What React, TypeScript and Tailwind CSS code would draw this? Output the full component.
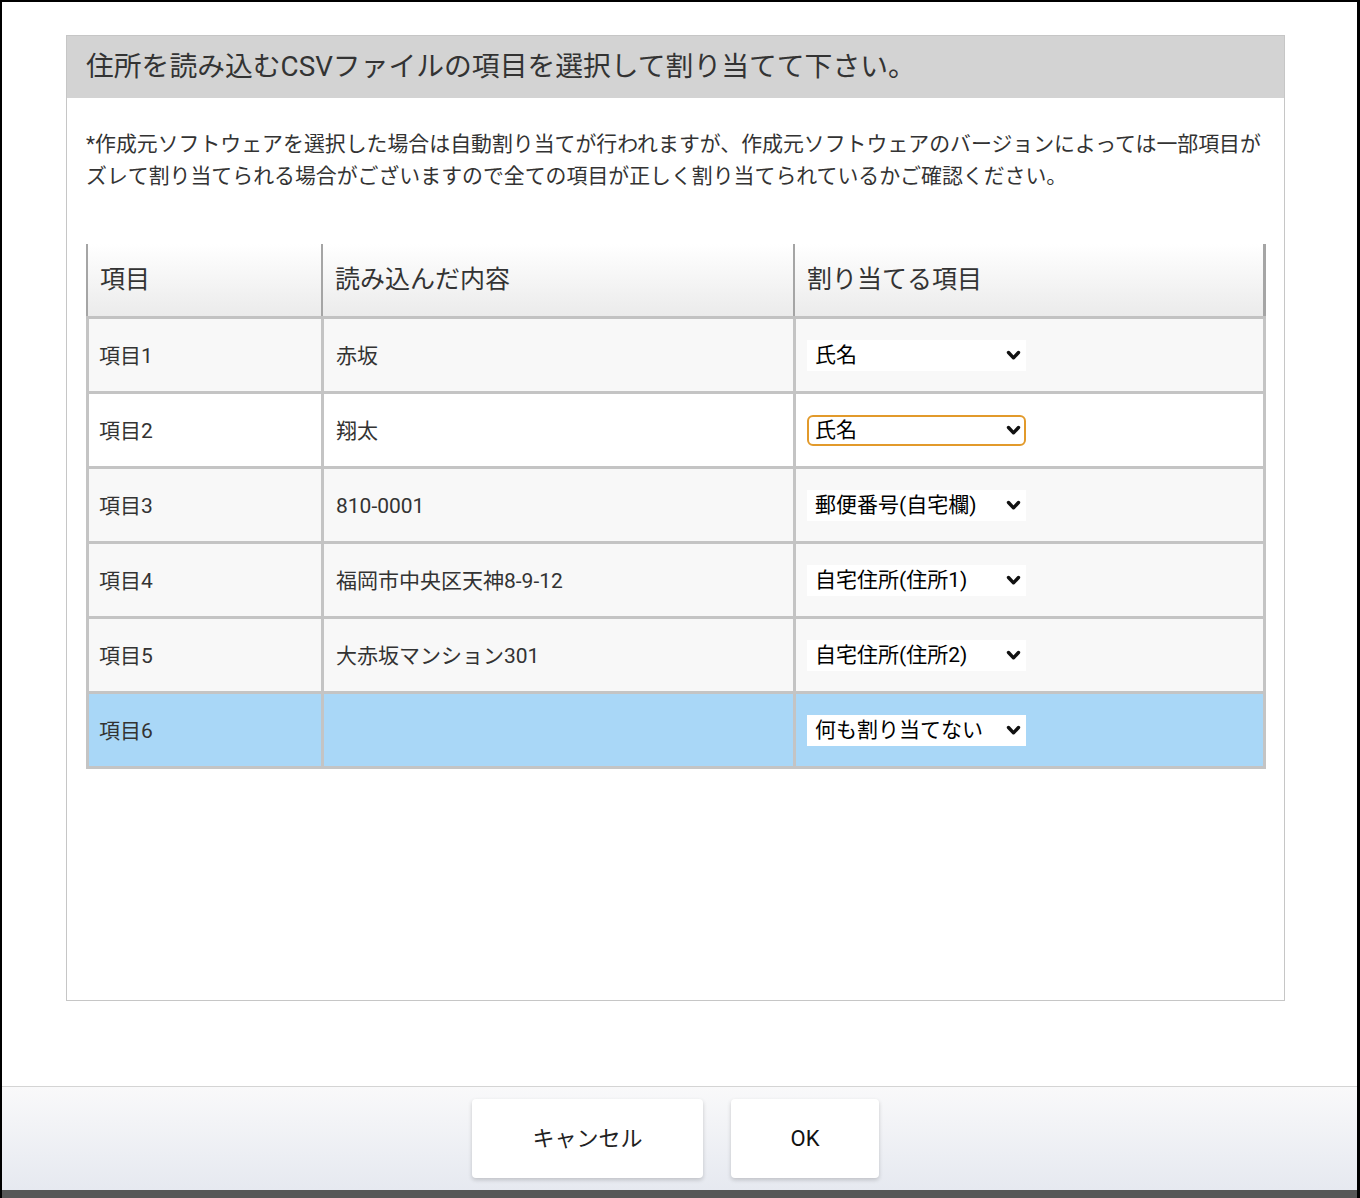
import React from "react";

const font = { fontFamily: 'Roboto, "Noto Sans CJK JP", "Noto Sans", sans-serif' };

function Chevron() {
  return (
    <svg width="15" height="11" viewBox="0 0 15 11" className="shrink-0">
      <path d="M2.5 2.5 L7.5 7.8 L12.5 2.5" fill="none" stroke="#111" strokeWidth="3.4" strokeLinecap="round" strokeLinejoin="round" />
    </svg>
  );
}

function Select({ label, focused }: { label: string; focused?: boolean }) {
  return (
    <div
      className={
        "w-[219px] h-[31px] bg-white flex items-center justify-between text-[21px] text-black leading-none " +
        (focused ? "border-2 border-[#e29a2b] rounded-[6px] pl-[6px] pr-[3px]" : "pl-[8px] pr-[5px]")
      }
    >
      <span className="whitespace-nowrap">{label}</span>
      <Chevron />
    </div>
  );
}

const rows = [
  { a: "項目1", b: "赤坂", c: "氏名", bg: "bg-[#f8f8f8]" },
  { a: "項目2", b: "翔太", c: "氏名", bg: "bg-white", focused: true },
  { a: "項目3", b: "810-0001", c: "郵便番号(自宅欄)", bg: "bg-[#f8f8f8]" },
  { a: "項目4", b: "福岡市中央区天神8-9-12", c: "自宅住所(住所1)", bg: "bg-[#f8f8f8]" },
  { a: "項目5", b: "大赤坂マンション301", c: "自宅住所(住所2)", bg: "bg-[#f8f8f8]" },
  { a: "項目6", b: "", c: "何も割り当てない", bg: "bg-[#a9d7f7]" },
];

export default function App() {
  return (
    <div
      style={font}
      className="w-[1360px] h-[1198px] flex flex-col bg-white border-t-2 border-l-2 border-r-[3px] border-black text-[#333]"
    >
      <div className="flex-1 pt-[33px] pl-[64px]">
        <div className="w-[1219px] h-[966px] border border-[#c6c6c6] flex flex-col">
          <div className="h-[62px] bg-[#d3d3d3] flex items-center pl-[19px] text-[27.8px] text-[#333] whitespace-nowrap">
            住所を読み込むCSVファイルの項目を選択して割り当てて下さい。
          </div>
          <div className="pl-[19px] pt-[30px] text-[20.9px] leading-[32px] text-[#333]">
            <div className="whitespace-nowrap">
              *作成元ソフトウェアを選択した場合は自動割り当てが行われますが、作成元ソフトウェアのバージョンによっては一部項目が
            </div>
            <div className="whitespace-nowrap">
              ズレて割り当てられる場合がございますので全ての項目が正しく割り当てられているかご確認ください。
            </div>
          </div>
          <div className="ml-[19px] mt-[52px] w-[1180px]">
            <div className="flex h-[75px] bg-gradient-to-b from-white to-[#ebebeb] border-b-[3px] border-[#c2c2c2] text-[25px] text-[#333]">
              <div className="w-[235px] border-l-2 border-[#a5a5a5] pl-[12px] flex items-center">項目</div>
              <div className="w-[472px] border-l-2 border-[#a5a5a5] pl-[12px] flex items-center">読み込んだ内容</div>
              <div className="flex-1 border-l-2 border-r-[3px] border-[#a5a5a5] pl-[12px] flex items-center">割り当てる項目</div>
            </div>
            {rows.map((r, i) => (
              <div
                key={i}
                className={"flex h-[75px] border-b-[3px] border-[#c4c4c4] text-[21px] text-[#333] " + r.bg}
              >
                <div className="w-[235px] border-l-[3px] border-[#c4c4c4] pl-[10px] pt-[3px] flex items-center">{r.a}</div>
                <div className="w-[472px] border-l-[3px] border-[#c4c4c4] pl-[12px] pt-[3px] flex items-center">{r.b}</div>
                <div className="flex-1 border-l-[3px] border-r-[3px] border-[#c4c4c4] pl-[11px] pt-[1px] flex items-center">
                  <Select label={r.c} focused={r.focused} />
                </div>
              </div>
            ))}
          </div>
        </div>
      </div>
      <div className="h-[112px] border-t border-[#d4d4d4] bg-gradient-to-b from-[#f9f9fa] to-[#e6e9f0] border-b-[8px] border-b-[#575757] flex justify-center items-start pt-[12px] pr-[8px] gap-[28px]">
        <button className="w-[231px] h-[79px] bg-white rounded-[4px] shadow-[0_2px_4px_rgba(0,0,0,0.18)] text-[22px] text-[#222]">
          キャンセル
        </button>
        <button className="w-[148px] h-[79px] bg-white rounded-[4px] shadow-[0_2px_4px_rgba(0,0,0,0.18)] text-[22px] text-[#111]">
          OK
        </button>
      </div>
    </div>
  );
}
